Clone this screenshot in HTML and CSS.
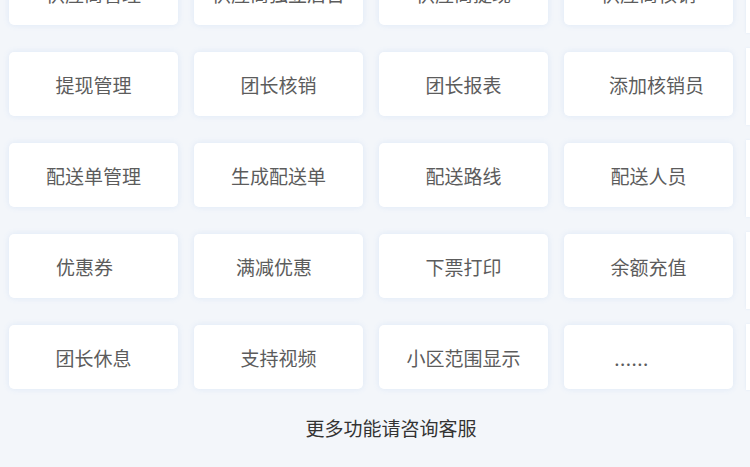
FILE: index.html
```html
<!DOCTYPE html>
<html lang="zh-CN">
<head>
  <meta charset="UTF-8" />
  <title>功能列表</title>
  <link rel="stylesheet" href="styles.css">
</head>
<body>

  <div class="page">
    <main class="panel">
      <div class="grid">
        <div class="item">供应商管理</div>
        <div class="item">供应商独立后台</div>
        <div class="item">供应商提现</div>
        <div class="item">供应商核销</div>

        <div class="item">提现管理</div>
        <div class="item">团长核销</div>
        <div class="item">团长报表</div>
        <div class="item shift-right">添加核销员</div>

        <div class="item">配送单管理</div>
        <div class="item">生成配送单</div>
        <div class="item">配送路线</div>
        <div class="item">配送人员</div>

        <div class="item shift-left">优惠券</div>
        <div class="item shift-left-sm">满减优惠</div>
        <div class="item">下票打印</div>
        <div class="item">余额充值</div>

        <div class="item">团长休息</div>
        <div class="item">支持视频</div>
        <div class="item">小区范围显示</div>
        <div class="item dots">......</div>
      </div>

      <p class="more">更多功能请咨询客服</p>
    </main>

    <aside class="side">
      <div class="side-block"></div>
      <div class="side-block"></div>
      <div class="side-block"></div>
      <div class="side-block"></div>
      <div class="side-block side-last"></div>
    </aside>
  </div>

</body>
</html>
```

FILE: styles.css
```css
* {
  box-sizing: border-box;
  margin: 0;
  padding: 0;
  font-family: 'Noto Sans CJK SC', 'Noto Sans', sans-serif;
}

body {
  background-color: #f3f6fa;
  color: #555;
  overflow: hidden;
}

.page {
  display: flex;
  height: 467px;
}

.panel {
  width: 746px;
  flex: none;
  padding-left: 9px;
}

.grid {
  display: grid;
  grid-template-columns: repeat(4, 169px);
  grid-auto-rows: 64px;
  column-gap: 16px;
  row-gap: 27px;
  margin-top: -39px;
}

.item {
  display: flex;
  align-items: center;
  justify-content: center;
  background-color: #fff;
  border-radius: 5px;
  box-shadow: 0 0 6px rgba(90, 150, 230, 0.14);
  font-size: 19px;
  color: #5c5c5c;
}

.shift-right {
  padding-left: 16px;
}

.shift-left {
  padding-right: 18px;
}

.shift-left-sm {
  padding-right: 9px;
}

.dots {
  padding-right: 34px;
  letter-spacing: 0.5px;
}

.more {
  margin-top: 26px;
  padding-left: 27px;
  text-align: center;
  font-size: 19px;
  line-height: 26px;
  color: #333;
}

.side {
  flex: 1;
  display: flex;
  flex-direction: column;
  gap: 15px;
  margin-top: -44px;
}

.side-block {
  height: 77px;
  background-color: #fff;
  box-shadow: 0 0 3px rgba(90, 150, 230, 0.12);
}

.side-last {
  height: 66px;
}
```
